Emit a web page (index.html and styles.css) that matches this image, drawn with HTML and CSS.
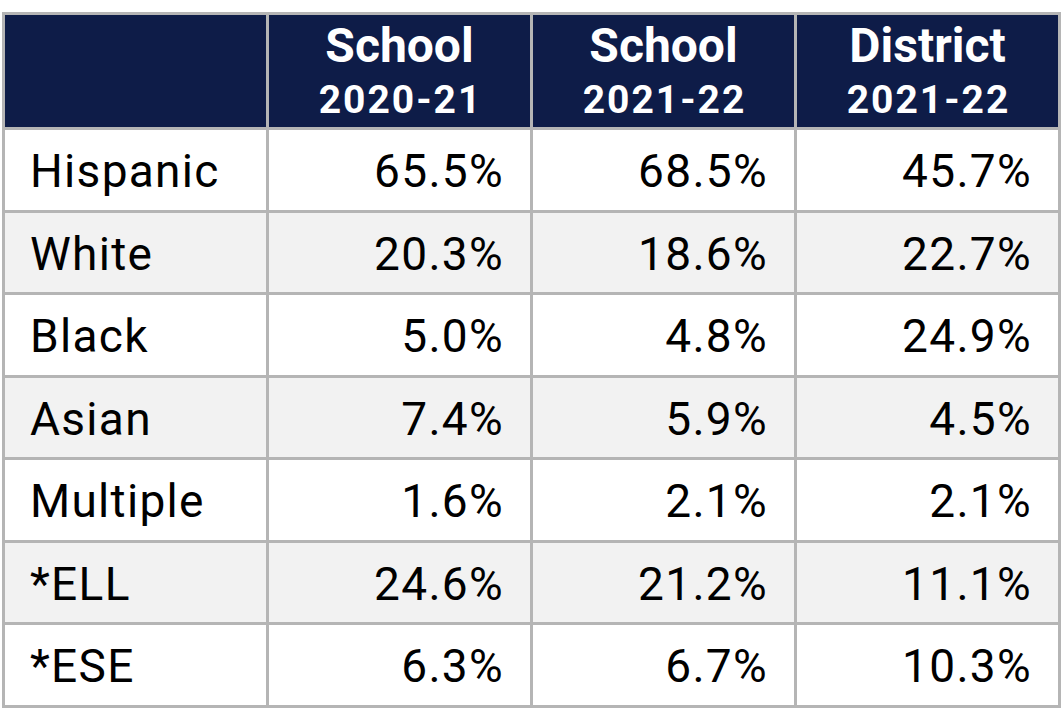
FILE: index.html
```html
<!DOCTYPE html>
<html lang="en">
<head>
<meta charset="utf-8">
<title>Demographics</title>
<link rel="stylesheet" href="styles.css">
</head>
<body>
<table class="demo">
  <thead>
    <tr>
      <th class="blank"></th>
      <th><span class="h1">School</span><span class="h2">2020-21</span></th>
      <th><span class="h1">School</span><span class="h2">2021-22</span></th>
      <th><span class="h1">District</span><span class="h2">2021-22</span></th>
    </tr>
  </thead>
  <tbody>
    <tr><td class="lbl">Hispanic</td><td>65.5%</td><td>68.5%</td><td>45.7%</td></tr>
    <tr class="alt"><td class="lbl">White</td><td>20.3%</td><td>18.6%</td><td>22.7%</td></tr>
    <tr><td class="lbl">Black</td><td>5.0%</td><td>4.8%</td><td>24.9%</td></tr>
    <tr class="alt"><td class="lbl">Asian</td><td>7.4%</td><td>5.9%</td><td>4.5%</td></tr>
    <tr><td class="lbl">Multiple</td><td>1.6%</td><td>2.1%</td><td>2.1%</td></tr>
    <tr class="alt"><td class="lbl">*ELL</td><td>24.6%</td><td>21.2%</td><td>11.1%</td></tr>
    <tr><td class="lbl">*ESE</td><td>6.3%</td><td>6.7%</td><td>10.3%</td></tr>
  </tbody>
</table>
</body>
</html>
```
FILE: styles.css
```css
html, body {
  margin: 0;
  padding: 0;
  background: #ffffff;
}
body {
  padding: 12px 0 0 2px;
  font-family: Roboto, "Liberation Sans", Arial, sans-serif;
}
.demo {
  border-collapse: separate;
  border-spacing: 3px;
  background: #b5b5b5;
  table-layout: fixed;
  width: 1059px;
}
.demo th {
  background: #0e1c48;
  color: #ffffff;
  height: 112px;
  padding: 0;
  vertical-align: top;
  text-align: center;
  font-weight: 700;
  width: 261px;
}
.demo .h1 {
  display: block;
  font-size: 48px;
  line-height: 58px;
  margin-top: 2px;
}
.demo .h2 {
  display: block;
  font-size: 39px;
  line-height: 40px;
  margin-top: 5px;
  letter-spacing: 2px;
  padding-left: 2px;
}
.demo td {
  background: #ffffff;
  color: #000000;
  height: 79.5px;
  box-sizing: border-box;
  padding: 3px 26px 0 25px;
  font-size: 46px;
  line-height: 46px;
  letter-spacing: 1.3px;
  text-align: right;
  vertical-align: middle;
}
.demo td.lbl {
  text-align: left;
}
.demo tr.alt td {
  background: #f2f2f2;
}
```
